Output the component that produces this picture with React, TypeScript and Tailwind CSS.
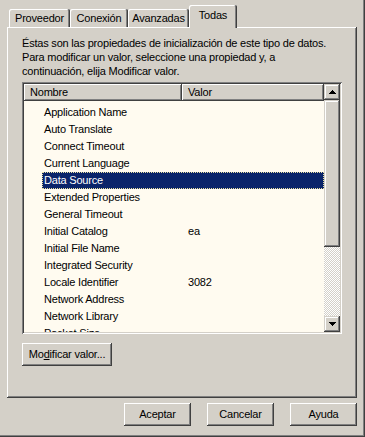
const tabs = [
  { label: "Proveedor", width: "w-[61px]" },
  { label: "Conexión", width: "w-[58px]" },
  { label: "Avanzadas", width: "w-[61px]" },
];

const rows = [
  { name: "Application Name", value: "" },
  { name: "Auto Translate", value: "" },
  { name: "Connect Timeout", value: "" },
  { name: "Current Language", value: "" },
  { name: "Data Source", value: "", selected: true },
  { name: "Extended Properties", value: "" },
  { name: "General Timeout", value: "" },
  { name: "Initial Catalog", value: "ea" },
  { name: "Initial File Name", value: "" },
  { name: "Integrated Security", value: "" },
  { name: "Locale Identifier", value: "3082" },
  { name: "Network Address", value: "" },
  { name: "Network Library", value: "" },
  { name: "Packet Size", value: "" },
];

function Arrow({ down }: { down?: boolean }) {
  return (
    <svg width="7" height="4" viewBox="0 0 7 4" shapeRendering="crispEdges" className={down ? "rotate-180" : ""}>
      <rect x="3" y="0" width="1" height="1" fill="#000" />
      <rect x="2" y="1" width="3" height="1" fill="#000" />
      <rect x="1" y="2" width="5" height="1" fill="#000" />
      <rect x="0" y="3" width="7" height="1" fill="#000" />
    </svg>
  );
}

function Button({ children }: { children: React.ReactNode }) {
  return (
    <div className="w-[67px] h-[23px] flex items-center justify-center bg-[#d4d0c8] shadow-[inset_-1px_-1px_#404040,inset_1px_1px_#fff,inset_-2px_-2px_#808080]">
      {children}
    </div>
  );
}

export default function App() {
  return (
    <div className="w-[365px] h-[437px] bg-[#d4d0c8] border-r border-b border-[#404040] font-['Liberation_Sans',Arial,sans-serif] text-[11px] tracking-[-0.2px] text-black overflow-hidden">
      <div className="h-full border-r border-b border-[#808080] pl-[7px] pr-[6px] pt-[5px] flex flex-col">
        {/* TABS */}
        <div className="flex items-end h-[22px] pl-[2px]">
          {tabs.map((tab) => (
            <div
              key={tab.label}
              className={`${tab.width} h-[18px] flex items-center justify-center rounded-t-[2px] shadow-[inset_-1px_0_#404040,inset_1px_1px_#fff,inset_-2px_0_#808080]`}
            >
              {tab.label}
            </div>
          ))}
          <div className="relative z-10 w-[48px] h-[23px] -mb-px pb-[2px] flex items-center justify-center bg-[#d4d0c8] rounded-t-[2px] shadow-[inset_-1px_0_#404040,inset_1px_1px_#fff,inset_-2px_0_#808080]">
            Todas
          </div>
        </div>

        {/* PANEL */}
        <div className="h-[371px] pl-[15px] pt-[9px] flex flex-col shadow-[inset_-1px_-1px_#404040,inset_1px_1px_#fff,inset_-2px_-2px_#808080]">
          <div className="leading-[14px] whitespace-nowrap">
            <div>Éstas son las propiedades de inicialización de este tipo de datos.</div>
            <div>Para modificar un valor, seleccione una propiedad y, a</div>
            <div>continuación, elija Modificar valor.</div>
          </div>

          {/* LISTBOX */}
          <div className="mt-[4px] w-[320px] h-[252px] p-[2px] bg-[#fffbf0] flex shadow-[inset_1px_1px_#808080,inset_-1px_-1px_#fff,inset_2px_2px_#404040,inset_-2px_-2px_#d4d0c8]">
            <div className="flex-1 flex flex-col overflow-hidden">
              {/* HEADER */}
              <div className="flex h-[17px] shrink-0 leading-[17px]">
                <div className="w-[158px] pl-[6px] bg-[#d4d0c8] shadow-[inset_-1px_-1px_#404040,inset_1px_1px_#fff,inset_-2px_-2px_#808080]">
                  Nombre
                </div>
                <div className="flex-1 pl-[6px] bg-[#d4d0c8] shadow-[inset_-1px_-1px_#404040,inset_1px_1px_#fff,inset_-2px_-2px_#808080]">
                  Valor
                </div>
              </div>

              {/* ROWS */}
              <div className="pt-[3px]">
                {rows.map((row) => (
                  <div key={row.name} className="h-[17px] pl-[18px] flex">
                    <div
                      className={`flex-1 flex leading-[17px] ${
                        row.selected
                          ? "bg-[#0a246a] text-white outline-1 outline-dotted -outline-offset-1 outline-[#e8e0a0]"
                          : ""
                      }`}
                    >
                      <div className="w-[146px] pl-[2px] whitespace-nowrap">{row.name}</div>
                      <div>{row.value}</div>
                    </div>
                  </div>
                ))}
              </div>
            </div>

            {/* SCROLLBAR */}
            <div className="w-[16px] flex flex-col">
              <div className="h-[16px] flex items-center justify-center bg-[#d4d0c8] shadow-[inset_-1px_-1px_#404040,inset_1px_1px_#d4d0c8,inset_-2px_-2px_#808080,inset_2px_2px_#fff]">
                <Arrow />
              </div>
              <div className="h-[147px] bg-[#d4d0c8] shadow-[inset_-1px_-1px_#404040,inset_1px_1px_#d4d0c8,inset_-2px_-2px_#808080,inset_2px_2px_#fff]" />
              <div className="flex-1 bg-[repeating-conic-gradient(#fff_0_25%,#d4d0c8_0_50%)] bg-size-[2px_2px]" />
              <div className="h-[16px] flex items-center justify-center bg-[#d4d0c8] shadow-[inset_-1px_-1px_#404040,inset_1px_1px_#d4d0c8,inset_-2px_-2px_#808080,inset_2px_2px_#fff]">
                <Arrow down />
              </div>
            </div>
          </div>

          {/* MODIFY */}
          <div className="mt-[9px] w-[90px] h-[23px] flex items-center justify-center shadow-[inset_-1px_-1px_#404040,inset_1px_1px_#fff,inset_-2px_-2px_#808080]">
            Mo<span className="underline">d</span>ificar valor...
          </div>
        </div>

        {/* FOOTER BUTTONS */}
        <div className="flex justify-end gap-[16px] mt-[5px]">
          <Button>Aceptar</Button>
          <Button>Cancelar</Button>
          <Button>Ayuda</Button>
        </div>
      </div>
    </div>
  );
}
